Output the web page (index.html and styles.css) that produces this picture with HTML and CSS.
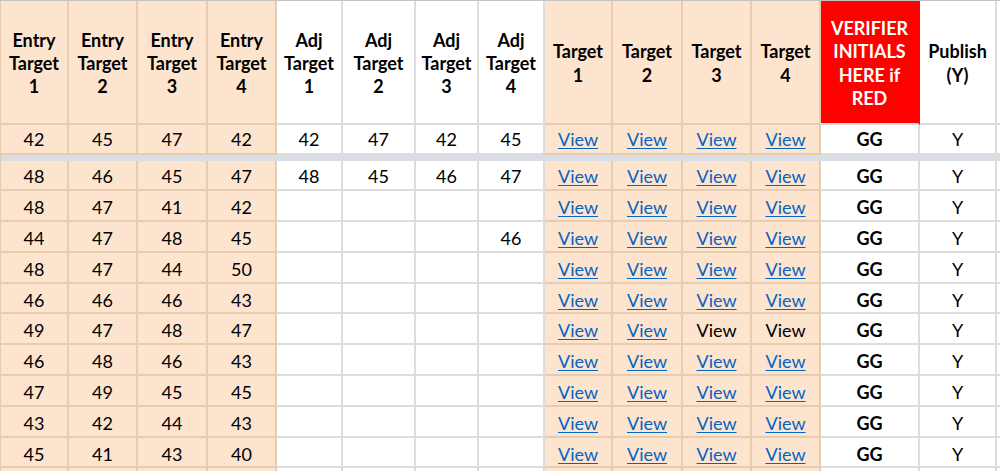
FILE: index.html
```html
<!DOCTYPE html>
<html>
<head>
<meta charset="utf-8">
<link rel="stylesheet" href="styles.css">
</head>
<body>
<table class="sheet">
  <colgroup>
    <col class="w69"><col class="w69"><col class="w70"><col class="w69">
    <col class="w66"><col class="w73"><col class="w63"><col class="w66">
    <col class="w68"><col class="w70"><col class="w69"><col class="w69">
    <col class="w99"><col class="w77"><col class="w3">
  </colgroup>
  <thead>
    <tr class="head">
      <th class="pe">Entry<br>Target<br>1</th>
      <th class="pe">Entry<br>Target<br>2</th>
      <th class="pe">Entry<br>Target<br>3</th>
      <th class="pe">Entry<br>Target<br>4</th>
      <th>Adj<br>Target<br>1</th>
      <th>Adj<br>Target<br>2</th>
      <th>Adj<br>Target<br>3</th>
      <th>Adj<br>Target<br>4</th>
      <th class="pe">Target<br>1</th>
      <th class="pe">Target<br>2</th>
      <th class="pe">Target<br>3</th>
      <th class="pe">Target<br>4</th>
      <th class="red">VERIFIER<br>INITIALS<br>HERE if<br>RED</th>
      <th class="pub">Publish<br>(Y)</th>
      <th class="edge"></th>
    </tr>
  </thead>
  <tbody>
    <tr class="row first">
      <td class="pe">42</td><td class="pe">45</td><td class="pe">47</td><td class="pe">42</td>
      <td>42</td><td>47</td><td>42</td><td>45</td>
      <td class="pe"><a href="#">View</a></td><td class="pe"><a href="#">View</a></td><td class="pe"><a href="#">View</a></td><td class="pe"><a href="#">View</a></td>
      <td class="b">GG</td><td>Y</td><td class="edge"></td>
    </tr>
    <tr class="sep"><td colspan="15"></td></tr>
    <tr class="row">
      <td class="pe">48</td><td class="pe">46</td><td class="pe">45</td><td class="pe">47</td>
      <td>48</td><td>45</td><td>46</td><td>47</td>
      <td class="pe"><a href="#">View</a></td><td class="pe"><a href="#">View</a></td><td class="pe"><a href="#">View</a></td><td class="pe"><a href="#">View</a></td>
      <td class="b">GG</td><td>Y</td><td class="edge"></td>
    </tr>
    <tr class="row">
      <td class="pe">48</td><td class="pe">47</td><td class="pe">41</td><td class="pe">42</td>
      <td></td><td></td><td></td><td></td>
      <td class="pe"><a href="#">View</a></td><td class="pe"><a href="#">View</a></td><td class="pe"><a href="#">View</a></td><td class="pe"><a href="#">View</a></td>
      <td class="b">GG</td><td>Y</td><td class="edge"></td>
    </tr>
    <tr class="row">
      <td class="pe">44</td><td class="pe">47</td><td class="pe">48</td><td class="pe">45</td>
      <td></td><td></td><td></td><td>46</td>
      <td class="pe"><a href="#">View</a></td><td class="pe"><a href="#">View</a></td><td class="pe"><a href="#">View</a></td><td class="pe"><a href="#">View</a></td>
      <td class="b">GG</td><td>Y</td><td class="edge"></td>
    </tr>
    <tr class="row">
      <td class="pe">48</td><td class="pe">47</td><td class="pe">44</td><td class="pe">50</td>
      <td></td><td></td><td></td><td></td>
      <td class="pe"><a href="#">View</a></td><td class="pe"><a href="#">View</a></td><td class="pe"><a href="#">View</a></td><td class="pe"><a href="#">View</a></td>
      <td class="b">GG</td><td>Y</td><td class="edge"></td>
    </tr>
    <tr class="row">
      <td class="pe">46</td><td class="pe">46</td><td class="pe">46</td><td class="pe">43</td>
      <td></td><td></td><td></td><td></td>
      <td class="pe"><a href="#">View</a></td><td class="pe"><a href="#">View</a></td><td class="pe"><a href="#">View</a></td><td class="pe"><a href="#">View</a></td>
      <td class="b">GG</td><td>Y</td><td class="edge"></td>
    </tr>
    <tr class="row">
      <td class="pe">49</td><td class="pe">47</td><td class="pe">48</td><td class="pe">47</td>
      <td></td><td></td><td></td><td></td>
      <td class="pe"><a href="#">View</a></td><td class="pe"><a href="#">View</a></td><td class="pe">View</td><td class="pe">View</td>
      <td class="b">GG</td><td>Y</td><td class="edge"></td>
    </tr>
    <tr class="row">
      <td class="pe">46</td><td class="pe">48</td><td class="pe">46</td><td class="pe">43</td>
      <td></td><td></td><td></td><td></td>
      <td class="pe"><a href="#">View</a></td><td class="pe"><a href="#">View</a></td><td class="pe"><a href="#">View</a></td><td class="pe"><a href="#">View</a></td>
      <td class="b">GG</td><td>Y</td><td class="edge"></td>
    </tr>
    <tr class="row">
      <td class="pe">47</td><td class="pe">49</td><td class="pe">45</td><td class="pe">45</td>
      <td></td><td></td><td></td><td></td>
      <td class="pe"><a href="#">View</a></td><td class="pe"><a href="#">View</a></td><td class="pe"><a href="#">View</a></td><td class="pe"><a href="#">View</a></td>
      <td class="b">GG</td><td>Y</td><td class="edge"></td>
    </tr>
    <tr class="row">
      <td class="pe">43</td><td class="pe">42</td><td class="pe">44</td><td class="pe">43</td>
      <td></td><td></td><td></td><td></td>
      <td class="pe"><a href="#">View</a></td><td class="pe"><a href="#">View</a></td><td class="pe"><a href="#">View</a></td><td class="pe"><a href="#">View</a></td>
      <td class="b">GG</td><td>Y</td><td class="edge"></td>
    </tr>
    <tr class="row">
      <td class="pe">45</td><td class="pe">41</td><td class="pe">43</td><td class="pe">40</td>
      <td></td><td></td><td></td><td></td>
      <td class="pe"><a href="#">View</a></td><td class="pe"><a href="#">View</a></td><td class="pe"><a href="#">View</a></td><td class="pe"><a href="#">View</a></td>
      <td class="b">GG</td><td>Y</td><td class="edge"></td>
    </tr>
    <tr class="row">
      <td class="pe"></td><td class="pe"></td><td class="pe"></td><td class="pe"></td>
      <td></td><td></td><td></td><td></td>
      <td class="pe"></td><td class="pe"></td><td class="pe"></td><td class="pe"></td>
      <td></td><td></td><td class="edge"></td>
    </tr>
  </tbody>
</table>
</body>
</html>
```
FILE: styles.css
```css
html, body {
  margin: 0;
  padding: 0;
  background: #ffffff;
  overflow: hidden;
}

.sheet {
  border-collapse: separate;
  border-spacing: 0;
  table-layout: fixed;
  width: 1000px;
  font-family: Lato, "Open Sans", sans-serif;
  font-size: 18px;
  color: #000;
  border-top: 1px solid #c4c4c4;
}

.w3 { width: 3px; }
.w63 { width: 63px; }
.w66 { width: 66px; }
.w68 { width: 68px; }
.w69 { width: 69px; }
.w70 { width: 70px; }
.w73 { width: 73px; }
.w77 { width: 77px; }
.w99 { width: 99px; }

.sheet th,
.sheet td {
  padding: 0;
  text-align: center;
  vertical-align: middle;
  border-right: 2px solid #dcdcdc;
  border-bottom: 2px solid #dcdcdc;
  background: #ffffff;
  overflow: hidden;
  white-space: nowrap;
}

.sheet th:first-child,
.sheet td:first-child {
  border-left: 1px solid #e3cbae;
}

.sheet th {
  font-weight: 700;
  line-height: 23.3px;
  height: 119px;
  padding-top: 3px;
}

.sheet .pe {
  background: #fde4cf;
  border-right-color: #e6cdb0;
  border-bottom-color: #e6cdb0;
}

.sheet .red {
  background: #ff0000;
  color: #ffffff;
  border-right-color: #ff0000;
  border-bottom-color: #dcdcdc;
}

.sheet .edge {
  border-right: none;
}

.row td {
  height: 25.8px;
  padding-top: 3px;
  line-height: 20px;
}

.first td {
  height: 26.5px;
  padding-top: 1px;
}

.sep td {
  height: 6px;
  padding: 0;
  background: #d8dde6;
  border-right: none;
  border-bottom: none;
  border-left: none;
}

.sheet .b {
  font-weight: 700;
}

.sheet a {
  color: #0563c1;
  text-decoration: underline;
  text-underline-offset: 2px;
}
```
